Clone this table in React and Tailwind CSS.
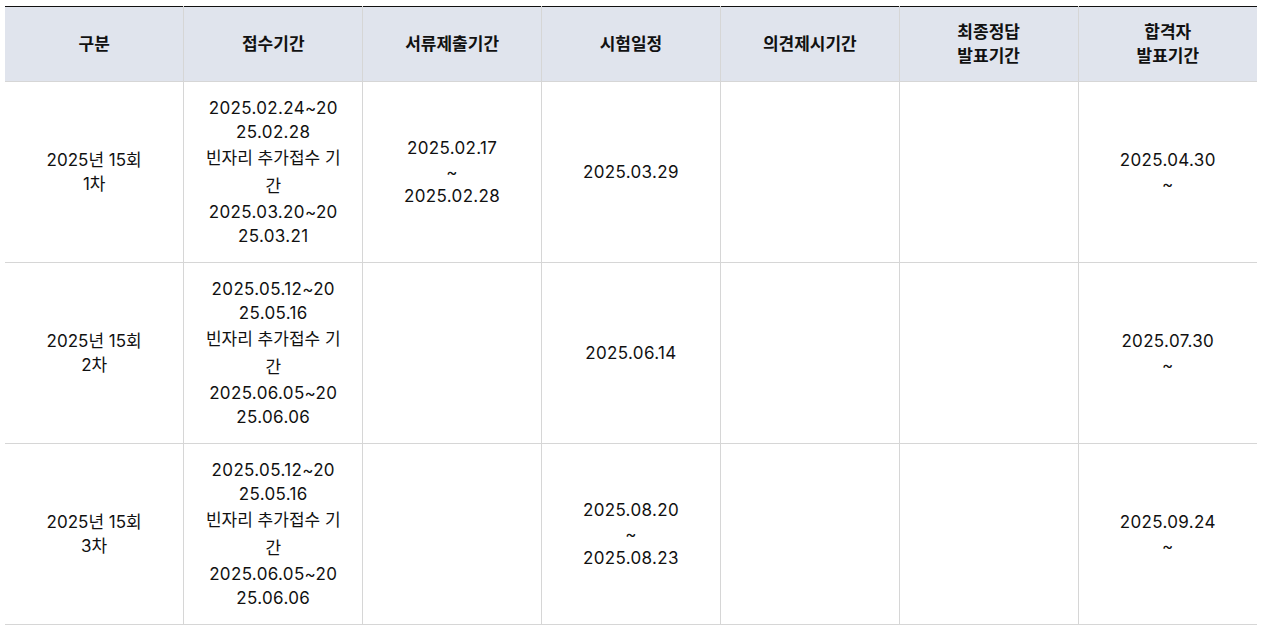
const font = { fontFamily: '"Inter", "Noto Sans CJK KR", sans-serif' };

const headers = [
  ["구분"],
  ["접수기간"],
  ["서류제출기간"],
  ["시험일정"],
  ["의견제시기간"],
  ["최종정답", "발표기간"],
  ["합격자", "발표기간"],
];

// 원본 화면에서 줄바꿈된 위치 그대로
const applyLines = (a, b) => [
  a.slice(0, 13),
  a.slice(13),
  "빈자리 추가접수 기",
  "간",
  b.slice(0, 13),
  b.slice(13),
];

const rows = [
  {
    round: ["2025년 15회", "1차"],
    apply: applyLines("2025.02.24~2025.02.28", "2025.03.20~2025.03.21"),
    docs: ["2025.02.17", "~", "2025.02.28"],
    exam: ["2025.03.29"],
    pass: ["2025.04.30", "~"],
  },
  {
    round: ["2025년 15회", "2차"],
    apply: applyLines("2025.05.12~2025.05.16", "2025.06.05~2025.06.06"),
    docs: [],
    exam: ["2025.06.14"],
    pass: ["2025.07.30", "~"],
  },
  {
    round: ["2025년 15회", "3차"],
    apply: applyLines("2025.05.12~2025.05.16", "2025.06.05~2025.06.06"),
    docs: [],
    exam: ["2025.08.20", "~", "2025.08.23"],
    pass: ["2025.09.24", "~"],
  },
];

const hangulOnly = /^[가-힣\s]+$/;
const hasHangul = /[가-힣]/;

function Lines({ items, body }) {
  return items.map((t, i) => (
    <div
      key={i}
      className={`whitespace-nowrap ${
        body && hangulOnly.test(t) ? "leading-[28px]" : "leading-6"
      } ${body && !hasHangul.test(t) ? "tracking-[0.02em]" : ""}`}
    >
      {t}
    </div>
  ));
}

function Cell({ items }) {
  return (
    <td className="border border-[#d6d6d6] px-3 text-center align-middle first:border-l-0 last:border-r-0">
      <Lines items={items} body />
    </td>
  );
}

export default function App() {
  return (
    <div className="min-h-screen bg-white pt-[6px] pl-[5px]" style={font}>
      <table className="w-[1252px] table-fixed border-collapse border-t border-t-[#111] text-[17px] text-[#111]">
        <thead>
          <tr className="h-[75px] bg-[#e0e4ed]">
            {headers.map((h, i) => (
              <th
                key={i}
                className="border-x border-b border-[#d6d6d6] px-3 text-center align-middle font-bold first:border-l-0 last:border-r-0"
              >
                <Lines items={h} />
              </th>
            ))}
          </tr>
        </thead>
        <tbody>
          {rows.map((r, i) => (
            <tr key={i} className="h-[181px]">
              <Cell items={r.round} />
              <Cell items={r.apply} />
              <Cell items={r.docs} />
              <Cell items={r.exam} />
              <Cell items={[]} />
              <Cell items={[]} />
              <Cell items={r.pass} />
            </tr>
          ))}
        </tbody>
      </table>
    </div>
  );
}
